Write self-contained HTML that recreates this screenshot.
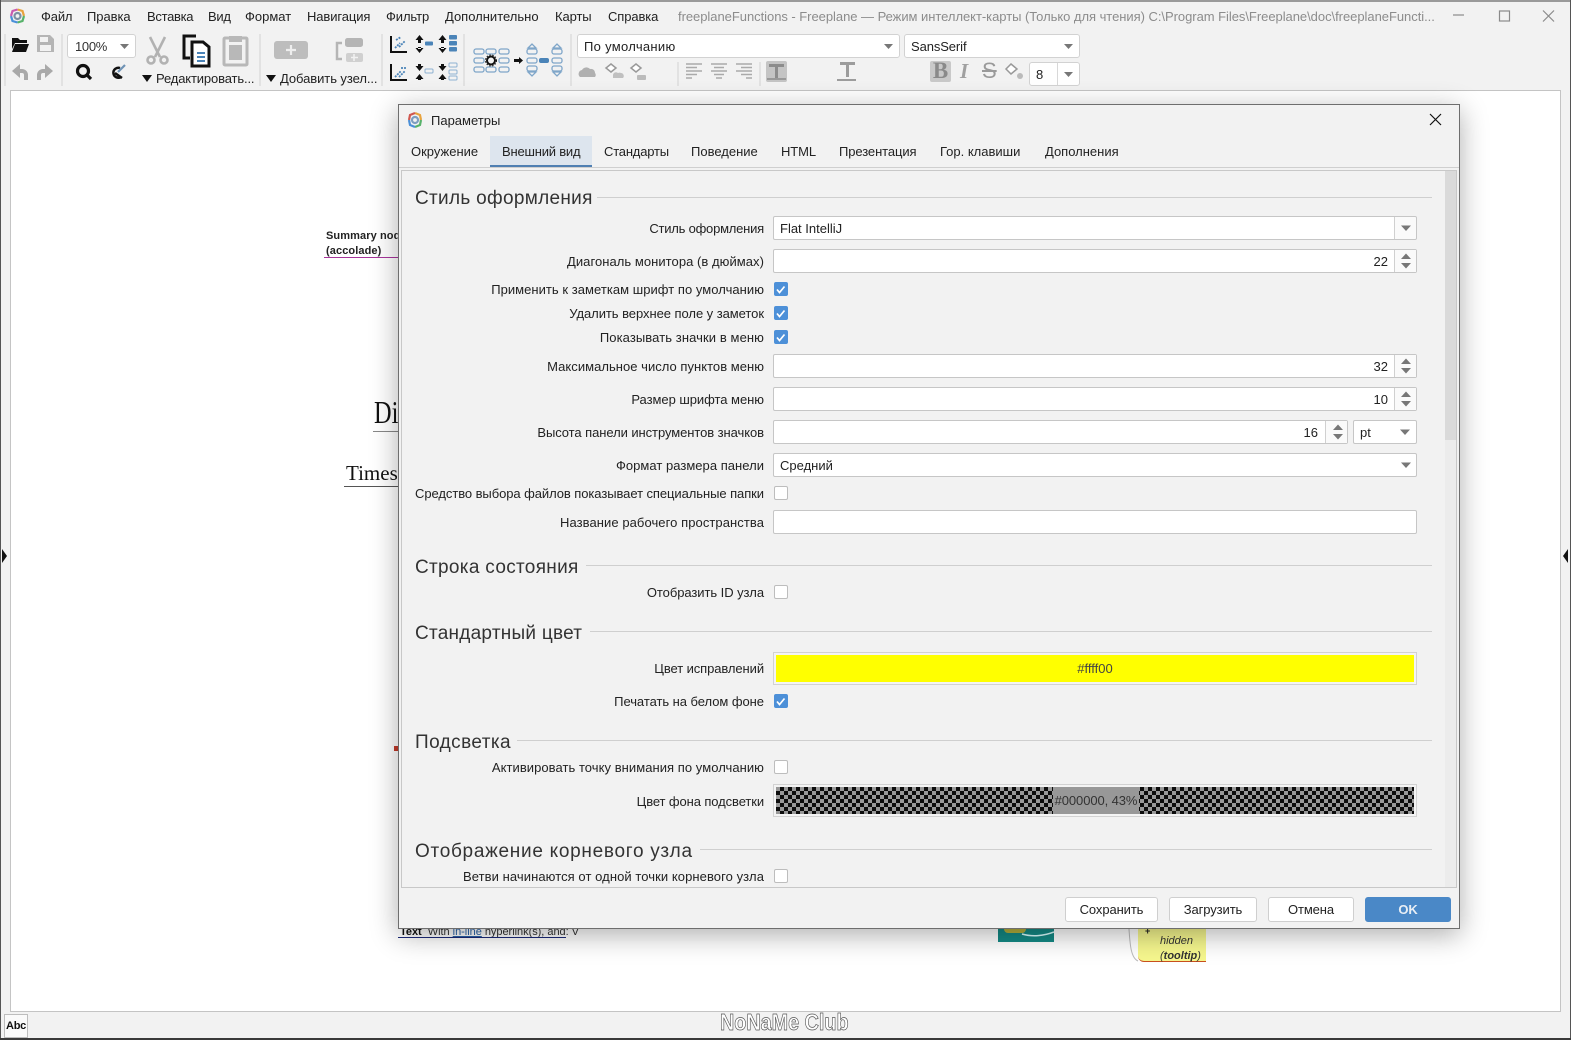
<!DOCTYPE html>
<html lang="ru"><head><meta charset="utf-8"><title>Freeplane</title>
<style>
html,body{margin:0;padding:0;width:1571px;height:1040px;overflow:hidden;background:#f2f2f2}
body{position:relative;font:13px "Liberation Sans","Noto Sans CJK SC",sans-serif;color:#222}
div,span{position:absolute;white-space:nowrap;box-sizing:border-box}
.m{top:8px;line-height:17px;color:#222;letter-spacing:0}
.l{right:807px;line-height:18px;color:#222}
.f{left:773px;width:644px;height:24px;background:#fff;border:1px solid #c6c6c6;border-radius:2px;line-height:23px;padding:0 6px}
.r{text-align:right}
.b{width:22px;height:22px;top:0;right:0;border-left:1px solid #d0d0d0;background:#fafafa}
.c{left:774px;width:14px;height:14px;background:#fff;border:1px solid #bdbdbd;border-radius:2px}
.k{background:#4d90d8;border-color:#4d90d8}
.h{left:415px;font-size:19px;line-height:24px;color:#333}
.s{height:1px;background:#cfcfcf;right:139px}
.t{top:143px;line-height:18px;letter-spacing:0}
.bt{top:897px;height:25px;background:#fff;border:1px solid #cfcfcf;border-radius:3px;text-align:center;line-height:23px;letter-spacing:-.1px}
</style></head><body>

<div style="left:0;top:0;width:1571px;height:2px;background:#9a9a9a"></div>
<div style="left:0;top:0;width:1px;height:1040px;background:#555"></div>
<div style="left:1570px;top:0;width:1px;height:1040px;background:#555"></div>
<div style="left:0;top:1038px;width:1571px;height:2px;background:#3a3a3a"></div>

<svg style="position:absolute;left:8px;top:7px" width="20" height="20" viewBox="0 0 20 20" fill="none" stroke-width="2.2"><path d="M9.5 2.5l5 1.5 1.5 5" stroke="#e8a33d"/><path d="M16 9l-1.5 5-5 1.5" stroke="#57b26a"/><path d="M9.5 15.500l-5-1.500L3 9" stroke="#4a90d9"/><path d="M3 9l1.500-5 5-1.500" stroke="#c95bb0"/><circle cx="9.500" cy="9" r="3" stroke="#7d8fa3"/></svg>
<span class="m" style="left:41px;letter-spacing:-.15px">Файл</span>
<span class="m" style="left:87px;letter-spacing:-.05px">Правка</span>
<span class="m" style="left:147px;letter-spacing:-.3px">Вставка</span>
<span class="m" style="left:208px;letter-spacing:-.3px">Вид</span>
<span class="m" style="left:245px">Формат</span>
<span class="m" style="left:307px;letter-spacing:-.1px">Навигация</span>
<span class="m" style="left:386px;letter-spacing:-.1px">Фильтр</span>
<span class="m" style="left:445px">Дополнительно</span>
<span class="m" style="left:555px;letter-spacing:-.1px">Карты</span>
<span class="m" style="left:608px;letter-spacing:-.1px">Справка</span>
<span class="m" style="left:678px;width:760px;color:#8c8c8c;letter-spacing:-.04px;overflow:hidden">freeplaneFunctions - Freeplane — Режим интеллект-карты (Только для чтения) C:\Program Files\Freeplane\doc\freeplaneFuncti...</span>
<svg style="position:absolute;left:1450px;top:5px" width="115" height="22" fill="none" stroke="#8a8a8a" stroke-width="1.200"><path d="M3 10h11"/><rect x="49.500" y="6" width="10" height="10"/><path d="M93 5.500l11 11M104 5.500l-11 11"/></svg>

<!-- toolbar -->
<svg style="position:absolute;left:0;top:30px" width="1100" height="62" viewBox="0 30 1100 62">
<g stroke="#d2d2d2"><path d="M5 34v52M62 34v52M260 34v52M382 34v52M464 34v52M571 34v52M678 62v24M760 62v24"/></g>
<path d="M12 38h6l2 2h7v3H15l-1 2-2 4z" fill="#111"/><path d="M15 44h14l-3 8H12z" fill="#111"/>
<path d="M37 35h13l4 4v13H37z" fill="#b5b5b5"/><path d="M40 37h8v5h-8zM40 45h11v6H40z" fill="#f2f2f2"/>
<path d="M20 64L12 71l8 7z" fill="#a9a9a9"/><path d="M19 71h3a4 4 0 0 1 4 4v5" fill="none" stroke="#a9a9a9" stroke-width="4"/>
<path d="M45 64l8 7-8 7z" fill="#a9a9a9"/><path d="M46 71h-3a4 4 0 0 0-4 4v5" fill="none" stroke="#a9a9a9" stroke-width="4"/>
<circle cx="83" cy="71" r="5.500" fill="none" stroke="#111" stroke-width="3.200"/><path d="M87 75l4 4" stroke="#111" stroke-width="3.200"/>
<path d="M120 68a5 5 0 1 0 1 9M115 73l7 5" fill="none" stroke="#111" stroke-width="2.500"/><path d="M118 72l7-7" stroke="#6f93b5" stroke-width="2.200"/>
<g fill="none" stroke="#b2b2b2" stroke-width="2.600"><path d="M150 37l10 20M165 37l-10 20"/><circle cx="151" cy="60" r="3.500"/><circle cx="164" cy="60" r="3.500"/></g>
<path d="M196 36h-12v22h6" fill="none" stroke="#111" stroke-width="3"/><path d="M192 42h11l6 5v19h-17z" fill="#fff" stroke="#111" stroke-width="3"/><path d="M197 53h8M197 57h8M197 61h8" stroke="#4b84b8" stroke-width="2"/>
<rect x="224" y="38" width="23" height="27" rx="1" fill="none" stroke="#b8b8b8" stroke-width="3"/><rect x="229" y="36" width="13" height="6" fill="#b8b8b8"/><rect x="229" y="45" width="13" height="15" fill="#b8b8b8"/>
<path d="M142 75h10l-5 7zM266 75h10l-5 7z" fill="#111"/>
<rect x="274" y="41" width="34" height="18" rx="3" fill="#bdbdbd"/><path d="M291 45v10M286 50h10" stroke="#eee" stroke-width="2.200"/>
<path d="M342 43h-5v16h5" fill="none" stroke="#b5b5b5" stroke-width="2.500"/><rect x="345" y="38" width="18" height="9" rx="2.500" fill="#b5b5b5"/><rect x="346" y="53" width="17" height="9" rx="2" fill="#d0d0d0"/><path d="M354 54v7M351 57.500h7" stroke="#f2f2f2" stroke-width="1.500"/>
<g fill="none" stroke="#111" stroke-width="2"><path d="M391 36v16h16"/><path d="M391 64v16h16"/></g>
<path d="M395 48l5-5M399 47l6-6M396 40l5-3" stroke="#4b84b8" stroke-width="1.800" fill="none" stroke-dasharray="2 1"/>
<path d="M395 77l6-6M399 77l6-6M401 68l5 0" stroke="#4b84b8" stroke-width="1.800" fill="none" stroke-dasharray="2 1"/>
<g fill="#111"><path d="M418 39h3v4h-3zM415.500 40l4-5 4 5zM418 47h3v2h-3zM415.500 48l4 5 4-5z"/><path d="M441 39h3v4h-3zM438.500 40l4-5 4 5zM441 47h3v2h-3zM438.500 48l4 5 4-5z"/><path d="M418 64h3v2h-3zM415.500 66l4 5 4-5zM418 76h3v4h-3zM415.500 79l4-5 4 5z"/><path d="M441 64h3v2h-3zM438.500 66l4 5 4-5zM441 76h3v4h-3zM438.500 79l4-5 4 5z"/></g>
<rect x="425" y="41.500" width="8" height="4" rx="1" fill="#4b84b8"/><rect x="425" y="69" width="8" height="4" rx="1" fill="none" stroke="#8fb2d2"/>
<g fill="#4b84b8"><rect x="449" y="35" width="8" height="4.500" rx="1"/><rect x="449" y="41" width="8" height="4.500" rx="1"/><rect x="449" y="47" width="8" height="4.500" rx="1"/></g>
<g fill="none" stroke="#8fb2d2"><rect x="449" y="63" width="8" height="4" rx="1"/><rect x="449" y="70" width="8" height="4" rx="1"/><rect x="449" y="76" width="8" height="4" rx="1"/></g>
<g fill="none" stroke="#7fa6c9" stroke-width="1.300"><rect x="474" y="49" width="10" height="5" rx="2"/><rect x="486" y="49" width="10" height="5" rx="2"/><rect x="499" y="49" width="10" height="5" rx="2"/><rect x="474" y="58" width="10" height="5" rx="2"/><rect x="499" y="58" width="10" height="5" rx="2"/><rect x="474" y="67" width="10" height="5" rx="2"/><rect x="486" y="67" width="10" height="5" rx="2"/><rect x="499" y="67" width="10" height="5" rx="2"/>
<rect x="527" y="49" width="10" height="5" rx="2"/><rect x="527" y="58" width="10" height="5" rx="2"/><rect x="552" y="49" width="10" height="5" rx="2"/><rect x="552" y="58" width="10" height="5" rx="2"/><rect x="552" y="66" width="10" height="5" rx="2"/><rect x="527" y="66" width="10" height="5" rx="2"/><path d="M528 48l4-4 4 4zM553 48l4-4 4 4zM528 72l4 4 4-4zM553 72l4 4 4-4z"/></g>
<rect x="539" y="58" width="10" height="5" rx="2" fill="#4b84b8"/>
<circle cx="491" cy="60.500" r="4" fill="none" stroke="#111" stroke-width="2"/><circle cx="491" cy="60.500" r="5.500" fill="none" stroke="#111" stroke-width="1" stroke-dasharray="1.500 1.500"/>
<path d="M514 59h5v-2l4 3.500-4 3.500v-2h-5z" fill="#111"/>
<path d="M580 77a4 4 0 0 1 2-7 5 5 0 0 1 8-1 4 4 0 0 1 5 4 3 3 0 0 1 0 4z" fill="#b0b0b0"/>
<path d="M611 64l5 4-5 4-5-4z" fill="#fff" stroke="#999" stroke-width="1.500"/><path d="M613 75a3 3 0 0 1 5-2 3 3 0 0 1 3 0 3 3 0 0 1 2 5h-10z" fill="#c0c0c0"/>
<path d="M636 64l5 4-5 4-5-4z" fill="#fff" stroke="#999" stroke-width="1.500"/><rect x="637" y="75" width="9" height="5" rx="1" fill="#bbb"/>
<g stroke="#aaa" stroke-width="1.500"><path d="M686 64h16M686 67.500h11M686 71h16M686 74.500h11M686 78h6"/><path d="M711 64h16M714 67.500h10M711 71h16M714 74.500h10M716 78h6"/><path d="M736 64h16M741 67.500h11M736 71h16M741 74.500h11M746 78h6"/></g>
<rect x="766" y="61" width="21" height="21" rx="2" fill="#c4c4c4"/><path d="M769 64h15v3h-6v11h-3V67h-6z" fill="#8c8c8c"/><path d="M767 79h19" stroke="#999" stroke-width="2"/>
<path d="M840 62h15v3h-6v12h-3V65h-6z" fill="#9c9c9c"/><path d="M837 80h19" stroke="#9c9c9c" stroke-width="2"/>
<rect x="930" y="61" width="21" height="21" rx="2" fill="#c9c9c9"/>
<path d="M1011 64l6 5-6 5-5-5z" fill="#fff" stroke="#999" stroke-width="1.500"/><circle cx="1020" cy="76" r="3" fill="#bbb"/>
</svg>
<div style="left:67px;top:34px;width:69px;height:24px;background:#fff;border:1px solid #d2d2d2;border-radius:3px;line-height:23px;padding-left:7px;color:#333;letter-spacing:-.3px">100%</div>
<div style="left:577px;top:34px;width:323px;height:24px;background:#fff;border:1px solid #d2d2d2;border-radius:3px;line-height:23px;padding-left:6px;letter-spacing:.3px">По умолчанию</div>
<div style="left:904px;top:34px;width:176px;height:24px;background:#fff;border:1px solid #d2d2d2;border-radius:3px;line-height:23px;padding-left:6px;letter-spacing:-.1px">SansSerif</div>
<div style="left:1029px;top:62px;width:51px;height:24px;background:#fff;border:1px solid #d2d2d2;border-radius:3px;line-height:23px;padding-left:6px">8<span style="left:27px;top:0;width:1px;height:22px;background:#d8d8d8"></span></div>
<svg style="position:absolute;left:0;top:30px" width="1100" height="62" viewBox="0 30 1100 62" fill="#777"><path d="M120 44h9l-4.500 5zM884 44h9l-4.500 5zM1064 44h9l-4.500 5zM1064 72h9l-4.500 5z"/></svg>
<span style="left:156px;top:70px;line-height:17px;letter-spacing:-.14px">Редактировать...</span>
<span style="left:280px;top:70px;line-height:17px;letter-spacing:-.07px">Добавить узел...</span>
<span style="left:930px;top:60px;width:21px;text-align:center;font:bold 23px/22px 'Liberation Serif',serif;color:#8a8a8a">B</span>
<span style="left:960px;top:61px;font:italic bold 21px/21px 'Liberation Serif',serif;color:#a0a0a0">I</span>
<span style="left:982px;top:60px;font:22px/22px 'Liberation Sans',sans-serif;color:#9a9a9a;text-decoration:line-through">S</span>

<!-- canvas -->
<div style="left:10px;top:90px;width:1551px;height:922px;background:#fff;border:1px solid #c4c4c4"></div>
<span style="left:326px;top:229px;font:bold 11px/15px 'Liberation Sans',sans-serif;color:#222;letter-spacing:.1px">Summary node<br>(accolade)</span>
<div style="left:324px;top:257px;width:76px;height:1px;background:#a8359c"></div>
<span style="left:374px;top:394px;font:32px/36px 'Liberation Serif',serif;color:#111;transform:scaleX(.76);transform-origin:0 0">Di</span>
<div style="left:373px;top:431px;width:30px;height:1px;background:#888"></div>
<span style="left:346px;top:461px;font:21px/24px 'Liberation Serif',serif;color:#111">Times</span>
<div style="left:344px;top:486px;width:60px;height:1px;background:#555"></div>
<div style="left:394px;top:746px;width:5px;height:5px;background:#c43a2a"></div>
<span style="left:400px;top:925px;font:11px/14px 'Liberation Sans',sans-serif;color:#333;letter-spacing:-.03px"><b style="color:#111">Text</b>&nbsp; With <u style="color:#2a63a8">in-line</u> hyperlink(s), and: V</span>
<div style="left:398px;top:937px;width:168px;height:1px;background:#1c2a7a"></div>
<div style="left:998px;top:920px;width:56px;height:22px;background:#148a85"></div>
<div style="left:1004px;top:925px;width:22px;height:8px;background:#b4b03c;border-radius:4px"></div>
<svg style="position:absolute;left:998px;top:925px" width="56" height="17" fill="none" stroke="#dff" stroke-width="1.500"><path d="M24 9c10 3 22 2 32-2"/></svg>
<div style="left:1138px;top:920px;width:68px;height:42px;background:#f6f78e;border-bottom:1px solid #c9501e;border-radius:0 0 0 6px"></div>
<span style="left:1160px;top:934px;font:italic 11px/15px 'Liberation Sans',sans-serif;color:#333">hidden<br>(<b>tooltip</b>)</span>
<span style="left:1145px;top:926px;font:bold 9px/10px 'Liberation Sans',sans-serif">+</span>
<svg style="position:absolute;left:1128px;top:925px" width="14" height="40" fill="none" stroke="#bbb"><path d="M1 4C2 20 3 33 10 36"/></svg>
<svg style="position:absolute;left:-1px;top:548px" width="10" height="16" fill="#111"><path d="M3 1l5 7-5 7z"/></svg>
<svg style="position:absolute;left:1561px;top:548px" width="10" height="16" fill="#111"><path d="M7 1L2 8l5 7z"/></svg>

<!-- status -->
<div style="left:4px;top:1014px;width:24px;height:24px;border:1px solid #bdbdbd;background:#fafafa;font:bold 11px/23px 'Liberation Sans',sans-serif;text-align:center;color:#111;letter-spacing:-.3px">Abc</div>
<span style="left:720px;top:1012px;font:bold 23px/20px 'Liberation Sans',sans-serif;color:#fff;-webkit-text-stroke:.7px #555;transform:scaleX(.86);transform-origin:0 0">NoNaMe Club</span>

<!-- dialog -->
<div style="left:398px;top:104px;width:1062px;height:825px;background:#f2f2f2;border:1px solid #6e6e6e;box-shadow:0 6px 26px rgba(0,0,0,.32)"></div>
<svg style="position:absolute;left:406px;top:111px" width="18" height="18" fill="none" stroke-width="2.200"><path d="M9 2l5 2 1 5" stroke="#e8a33d"/><path d="M15 9l-1 5-5 2" stroke="#57b26a"/><path d="M9 16l-5-2-1-5" stroke="#4a90d9"/><path d="M3 9l1-5 5-2" stroke="#d0574f"/><circle cx="9" cy="9" r="3" stroke="#7d9ec0"/></svg>
<span style="left:431px;top:112px;line-height:17px;letter-spacing:0">Параметры</span>
<svg style="position:absolute;left:1428px;top:112px" width="16" height="16" stroke="#111" stroke-width="1.200"><path d="M2 2l11 11M13 2L2 13"/></svg>

<div style="left:490px;top:136px;width:102px;height:32px;background:#dde5ee;border-bottom:3px solid #4f7fb2"></div>
<span class="t" style="left:411px">Окружение</span>
<span class="t" style="left:502px;letter-spacing:-.2px">Внешний вид</span>
<span class="t" style="left:604px;letter-spacing:-.2px">Стандарты</span>
<span class="t" style="left:691px">Поведение</span>
<span class="t" style="left:781px;letter-spacing:-.1px">HTML</span>
<span class="t" style="left:839px;letter-spacing:-.1px">Презентация</span>
<span class="t" style="left:940px">Гор. клавиши</span>
<span class="t" style="left:1045px">Дополнения</span>
<div style="left:399px;top:167px;width:1060px;height:1px;background:#cfcfcf"></div>

<div style="left:401px;top:170px;width:1056px;height:718px;background:#f2f2f2;border:1px solid #c8c8c8;overflow:hidden"></div>
<div style="left:1445px;top:171px;width:11px;height:716px;background:#ececec"></div>
<div style="left:1445px;top:171px;width:11px;height:269px;background:#dadada"></div>

<span class="h" style="top:187px;letter-spacing:.31px">Стиль оформления</span><div class="s" style="left:597px;top:197px"></div>
<span class="l" style="top:220px;letter-spacing:-.22px">Стиль оформления</span>
<div class="f" style="top:216px">Flat IntelliJ<div class="b" style="border-radius:0 2px 2px 0"></div></div>
<span class="l" style="top:253px;letter-spacing:.05px">Диагональ монитора (в дюймах)</span>
<div class="f r" style="top:249px;padding-right:28px">22<div class="b"></div></div>
<span class="l" style="top:281px;letter-spacing:.04px">Применить к заметкам шрифт по умолчанию</span>
<span class="l" style="top:305px;letter-spacing:-.05px">Удалить верхнее поле у заметок</span>
<span class="l" style="top:329px;letter-spacing:.09px">Показывать значки в меню</span>
<span class="l" style="top:358px;letter-spacing:.03px">Максимальное число пунктов меню</span>
<div class="f r" style="top:354px;padding-right:28px">32<div class="b"></div></div>
<span class="l" style="top:391px;letter-spacing:-.04px">Размер шрифта меню</span>
<div class="f r" style="top:387px;padding-right:28px">10<div class="b"></div></div>
<span class="l" style="top:424px;letter-spacing:-.07px">Высота панели инструментов значков</span>
<div class="f r" style="top:420px;width:575px;padding-right:29px">16<div class="b"></div></div>
<div class="f" style="left:1353px;top:420px;width:64px">pt</div>
<span class="l" style="top:457px;letter-spacing:.03px">Формат размера панели</span>
<div class="f" style="top:453px">Средний</div>
<span class="l" style="top:485px;letter-spacing:-.07px">Средство выбора файлов показывает специальные папки</span>
<span class="l" style="top:514px;letter-spacing:.07px">Название рабочего пространства</span>
<div class="f" style="top:510px"></div>

<span class="h" style="top:556px;letter-spacing:.31px">Строка состояния</span><div class="s" style="left:586px;top:565px"></div>
<span class="l" style="top:584px;letter-spacing:-.06px">Отобразить ID узла</span>
<span class="h" style="top:622px;letter-spacing:.25px">Стандартный цвет</span><div class="s" style="left:590px;top:631px"></div>
<span class="l" style="top:660px;letter-spacing:-.09px">Цвет исправлений</span>
<div style="left:773px;top:652px;width:644px;height:33px;background:#ff0;border:3px solid #f4f4f4;outline:1px solid #d2d2d2;outline-offset:-1px;text-align:center;line-height:28px;color:#444">#ffff00</div>
<span class="l" style="top:693px;letter-spacing:-.05px">Печатать на белом фоне</span>
<span class="h" style="top:731px;letter-spacing:.42px">Подсветка</span><div class="s" style="left:517px;top:740px"></div>
<span class="l" style="top:759px;letter-spacing:.05px">Активировать точку внимания по умолчанию</span>
<span class="l" style="top:793px;letter-spacing:-.1px">Цвет фона подсветки</span>
<div style="left:773px;top:784px;width:644px;height:33px;border:3px solid #f4f4f4;outline:1px solid #d2d2d2;outline-offset:-1px;background:conic-gradient(#0d0d0d 25%,#989898 0 50%,#0d0d0d 0 75%,#989898 0) 0 0/8px 8px"><span style="left:277px;top:0;width:86px;height:27px;background:#989898;line-height:28px;text-align:center;color:#333;letter-spacing:-.1px">#000000, 43%</span></div>
<span class="h" style="top:840px;letter-spacing:.71px">Отображение корневого узла</span><div class="s" style="left:700px;top:849px"></div>
<span class="l" style="top:868px;letter-spacing:.07px">Ветви начинаются от одной точки корневого узла</span>

<div class="c k" style="top:282px"></div><div class="c k" style="top:306px"></div><div class="c k" style="top:330px"></div>
<div class="c" style="top:486px"></div><div class="c" style="top:585px"></div><div class="c k" style="top:694px"></div><div class="c" style="top:760px"></div><div class="c" style="top:869px"></div>
<svg style="position:absolute;left:0;top:0" width="1571" height="1040" fill="none" stroke="#fff" stroke-width="1.700"><path d="M777 289.500l2.500 3 5-6M777 313.500l2.500 3 5-6M777 337.500l2.500 3 5-6M777 701.500l2.500 3 5-6"/>
<g fill="#777" stroke="none"><path d="M1401 225.500h10l-5 5.500zM1401 462.500h10l-5 5.500zM1400 429.500h10l-5 5.500z"/>
<path d="M1401 259h10l-5-5.500zM1401 263h10l-5 5.500zM1401 364h10l-5-5.500zM1401 368h10l-5 5.500zM1401 397h10l-5-5.500zM1401 401h10l-5 5.500zM1333 430h10l-5-5.500zM1333 434h10l-5 5.500z"/></g></svg>

<div class="bt" style="left:1065px;width:93px">Сохранить</div>
<div class="bt" style="left:1169px;width:88px">Загрузить</div>
<div class="bt" style="left:1268px;width:86px">Отмена</div>
<div class="bt" style="left:1365px;width:86px;background:#4a88c7;border-color:#4a88c7;color:#e8eef5;font-weight:bold">OK</div>
</body></html>
